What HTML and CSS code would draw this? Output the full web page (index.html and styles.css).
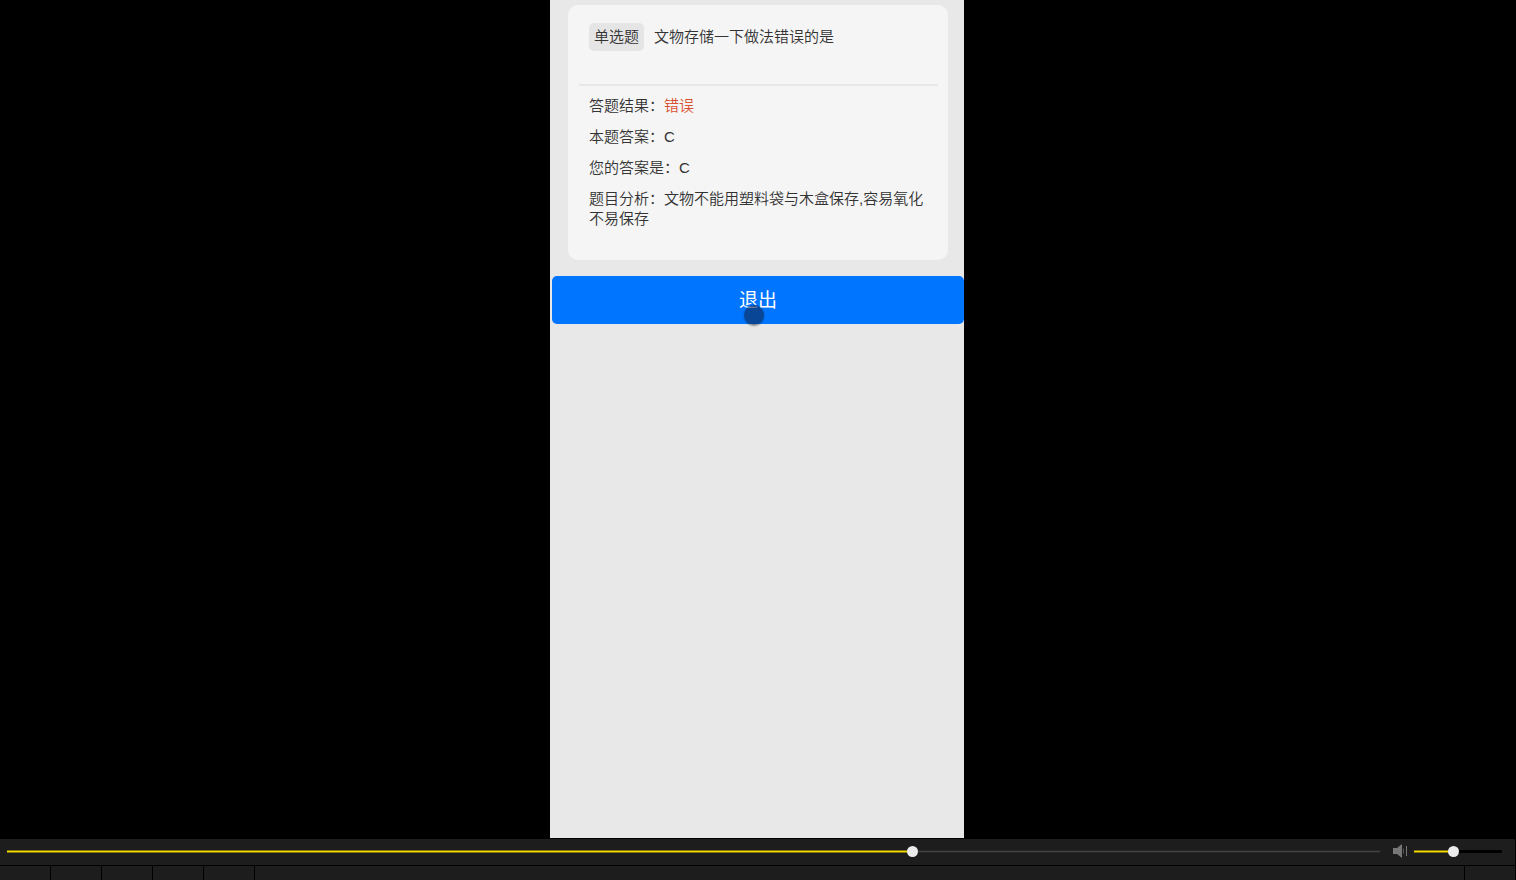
FILE: index.html
```html
<!DOCTYPE html>
<html lang="zh-CN">
<head>
    <meta charset="utf-8">
    <title>单选题</title>
    <link rel="stylesheet" href="styles.css">
</head>
<body>
    <main class="stage">
        <div class="phone">
            <section class="card">
                <div class="question">
                    <span class="tag">单选题</span>
                    <span>文物存储一下做法错误的是</span>
                </div>
                <div class="result">
                    <p>答题结果：<span class="wrong">错误</span></p>
                    <p>本题答案：C</p>
                    <p>您的答案是：C</p>
                    <p>题目分析：文物不能用塑料袋与木盒保存,容易氧化不易保存</p>
                </div>
            </section>
            <button class="exit" type="button">退出<span class="touch"></span></button>
        </div>
    </main>

    <!-- player bar -->
    <div class="seekbar">
        <input type="range" class="seek" aria-label="播放进度" min="0" max="1000" value="661" style="--fill: 66.1%">
        <button class="mute" type="button" aria-label="静音">
            <svg width="16" height="14" viewBox="0 0 16 14">
                <path d="M1 4h4l5-4v14l-5-4H1z" fill="#777"/>
                <path d="M11.5 4.5v5" stroke="#555" stroke-width="1"/>
                <path d="M14.5 2v10" stroke="#777" stroke-width="1"/>
            </svg>
        </button>
        <input type="range" class="volume" aria-label="音量" min="0" max="1000" value="436" style="--fill: 43.6%">
    </div>
    <div class="controls">
        <button type="button" aria-label="播放"></button>
        <button type="button" aria-label="停止"></button>
        <button type="button" aria-label="上一个"></button>
        <button type="button" aria-label="下一个"></button>
        <button type="button" aria-label="打开"></button>
        <div class="info"></div>
        <button type="button" aria-label="设置"></button>
    </div>
</body>
</html>
```

FILE: styles.css
```css
* {
    box-sizing: border-box;
}

body {
    margin: 0;
    height: 100vh;
    display: flex;
    flex-direction: column;
    overflow: hidden;
    background: #000;
    color: #333;
    font-family: "Liberation Sans", "Noto Sans CJK SC", sans-serif;
    font-size: 15px;
    font-weight: 350;
    line-height: 20px;
}

button {
    border: 0;
    padding: 0;
    font-family: inherit;
}

.stage {
    flex: 1;
    min-height: 0;
    display: flex;
    justify-content: center;
    padding: 0 2px 1px 0;
}

.phone {
    width: 414px;
    padding: 5px 0 0 2px;
    background: #e8e8e8;
}

.card {
    margin: 0 16px;
    height: 255px;
    padding: 18px 10px 0 11px;
    background: #f5f5f5;
    border-radius: 10px;
}

.question {
    display: flex;
    align-items: flex-start;
    gap: 10px;
    height: 63px;
    padding-left: 10px;
    line-height: 28px;
    border-bottom: 2px solid #e8e8e8;
}

.tag {
    padding: 0 5px;
    background: #e5e5e5;
    border-radius: 5px;
}

.result {
    padding: 10px 10px 0;
}

.result p {
    margin: 0 0 11px;
}

.wrong {
    color: #d8512f;
}

.exit {
    position: relative;
    display: block;
    width: 100%;
    height: 48px;
    margin-top: 16px;
    padding-bottom: 4px;
    background: #0075ff;
    border-radius: 5px;
    color: #fff;
    font-size: 19px;
    cursor: pointer;
}

/* finger mark over the button */
.touch {
    position: absolute;
    left: 192px;
    top: 29px;
    width: 20px;
    height: 20px;
    border-radius: 50%;
    background: rgba(15, 40, 80, 0.6);
    box-shadow: 0 1px 2px rgba(0, 0, 0, 0.4);
}

.seekbar {
    display: flex;
    align-items: center;
    height: 26px;
    padding: 0 13px 2px 7px;
    background: #1d1d1d;
    border-right: 1px solid #000;
}

input[type="range"] {
    -webkit-appearance: none;
    appearance: none;
    height: 12px;
    margin: 0;
    background: transparent;
}

input[type="range"]::-webkit-slider-runnable-track {
    height: 3px;
    background:
        linear-gradient(#85770c 1px, #f5dc00 1px, #f5dc00 2px, #85770c 2px) 0 0 / var(--fill) 100% no-repeat,
        var(--rest);
}

input[type="range"]::-webkit-slider-thumb {
    -webkit-appearance: none;
    width: 11px;
    height: 11px;
    margin-top: -4px;
    border-radius: 50%;
    background: #ececec;
}

.seek {
    --rest: linear-gradient(#262626 1px, #444 1px, #444 2px, #262626 2px);
    flex: 1;
    min-width: 0;
}

.mute {
    display: flex;
    margin: 0 6px 0 12px;
    background: none;
}

.volume {
    --rest: #000;
    width: 88px;
}

.controls {
    display: flex;
    gap: 1px;
    height: 14px;
    margin-top: 1px;
    border-right: 1px solid #000;
}

.controls button {
    width: 50px;
    background: #1d1d1d;
}

.info {
    flex: 1;
    background: #1d1d1d;
}
```
